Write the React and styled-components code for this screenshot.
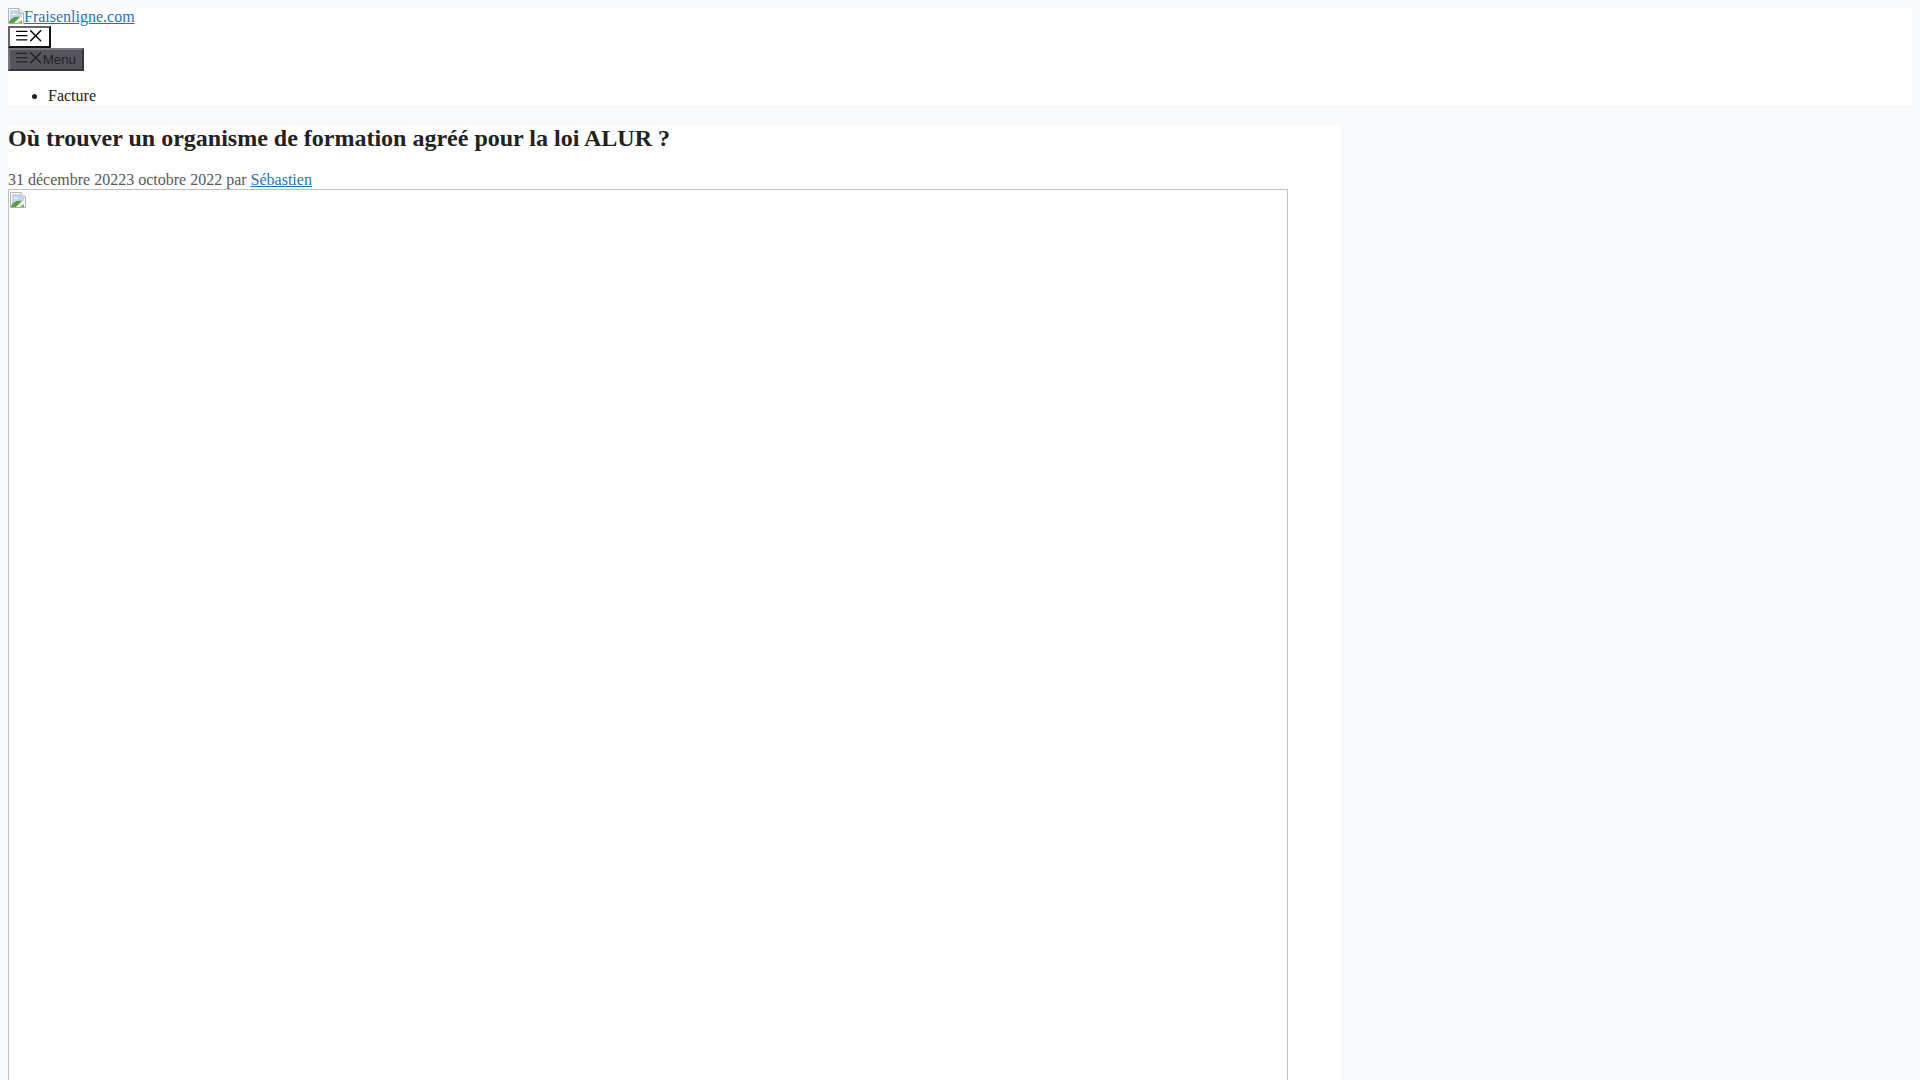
import styled, { createGlobalStyle } from "styled-components";

const GlobalStyle = createGlobalStyle`
  body {
    margin: 8px;
    background: #f7f8f9;
    color: #222222;
    font-family: "Liberation Serif", "Times New Roman", serif;
    font-size: 16px;
    line-height: 18px;
  }
`

const Header = styled.header`
  background: #ffffff;
`

const LogoRow = styled.div`
  height: 18px;
`

const LogoLink = styled.a`
  color: #1e73be;
  text-decoration: underline;
`

const BrokenIcon = styled.svg`
  display: ${(props) => (props.$block ? "block" : "inline")};
  width: 16px;
  height: 16px;
  vertical-align: -2px;
`

const ToggleRow = styled.div`
  display: flex;
  flex-direction: column;
  align-items: flex-start;
`

const ToggleButton = styled.button`
  display: flex;
  align-items: center;
  box-sizing: border-box;
  height: ${(props) => (props.$dark ? "23px" : "22px")};
  padding: 0 6px ${(props) => (props.$dark ? "3px" : "2px")};
  border: 2px solid;
  border-color: ${(props) => (props.$dark ? "#77777d #35353a #35353a #77777d" : "#666666 #111111 #111111 #666666")};
  border-radius: 0;
  background: ${(props) => (props.$dark ? "#55555e" : "#ffffff")};
  color: ${(props) => (props.$dark ? "#222222" : "#000000")};
  font-family: "Liberation Sans", Arial, sans-serif;
  font-size: 13.333px;
`

const Glyph = styled.svg`
  flex: none;
  width: 1em;
  height: 1em;
  fill: currentColor;
`

const MenuLabel = styled.span`
  padding-top: 2px;
`

const NavList = styled.ul`
  margin: 16px 0 0;
  padding: 0 0 0 40px;
`

const Main = styled.main`
  margin-top: 20px;
  width: 1333px;
  background: #ffffff;
`

const Title = styled.h2`
  margin: 0 0 19px;
  font-size: 24px;
  font-weight: 700;
  line-height: 27px;
`

const Meta = styled.div`
  color: #595959;
`

const AuthorLink = styled.a`
  color: #1e73be;
`

const ImageFrame = styled.div`
  box-sizing: border-box;
  width: 1280px;
  height: 891px;
  padding: 2px 1px 0;
  border: 1px solid #c0c0c0;
  border-bottom: 0;
`

const BarsPath = "M0 96c0-13.255 10.745-24 24-24h464c13.255 0 24 10.745 24 24s-10.745 24-24 24H24c-13.255 0-24-10.745-24-24zm0 160c0-13.255 10.745-24 24-24h464c13.255 0 24 10.745 24 24s-10.745 24-24 24H24c-13.255 0-24-10.745-24-24zm0 160c0-13.255 10.745-24 24-24h464c13.255 0 24 10.745 24 24s-10.745 24-24 24H24c-13.255 0-24-10.745-24-24z"
const ClosePath = "M71.029 71.029c9.373-9.372 24.569-9.372 33.942 0L256 222.059l151.029-151.03c9.373-9.372 24.569-9.372 33.942 0 9.372 9.373 9.372 24.569 0 33.942L289.941 256l151.03 151.029c9.372 9.373 9.372 24.569 0 33.942-9.373 9.372-24.569 9.372-33.942 0L256 289.941l-151.029 151.03c-9.373 9.372-24.569 9.372-33.942 0-9.372-9.373-9.372-24.569 0-33.942L222.059 256 71.029 104.971c-9.372-9.373-9.372-24.569 0-33.942z"

const MenuIcons = () => (
    <>
        <Glyph viewBox="0 0 590 512" preserveAspectRatio="none"><path d={BarsPath} /></Glyph>
        <Glyph viewBox="32 32 448 448"><path d={ClosePath} /></Glyph>
    </>
)

// the browser's broken image picture
const Broken = ({ block }) => (
    <BrokenIcon viewBox="0 0 16 16" $block={block}>
        <path d="M.5.5h10.5l4.5 4.5v10.5H.5z" fill="#ffffff" stroke="#b0b0b0" />
        <path d="M2 2h8.5v3.5H14V9L2 12z" fill="#c0d5f2" />
        <path d="M4 7c1-2 3-2 5 0z" fill="#ffffff" />
        <path d="M1 15v-1c2-4 6-6 11-5l-6 6z" fill="#4fa52f" />
        <path d="M10 15l4-3v3z" fill="#6cb54c" />
        <path d="M11 .5v4.5h4.5" fill="#eeeeee" stroke="#b0b0b0" />
    </BrokenIcon>
)

const App = () => {
    return (
        <>
            <GlobalStyle />
            <Header>
                <LogoRow>
                    <LogoLink href="#"><Broken />Fraisenligne.com</LogoLink>
                </LogoRow>
                <ToggleRow>
                    <ToggleButton><MenuIcons /></ToggleButton>
                    <ToggleButton $dark><MenuIcons /><MenuLabel>Menu</MenuLabel></ToggleButton>
                </ToggleRow>
                <NavList>
                    <li>Facture</li>
                </NavList>
            </Header>
            <Main>
                <Title>Où trouver un organisme de formation agréé pour la loi ALUR ?</Title>
                <Meta>31 décembre 20223 octobre 2022 par <AuthorLink href="#">Sébastien</AuthorLink></Meta>
                <ImageFrame><Broken block /></ImageFrame>
            </Main>
        </>
    )
}

export default App
